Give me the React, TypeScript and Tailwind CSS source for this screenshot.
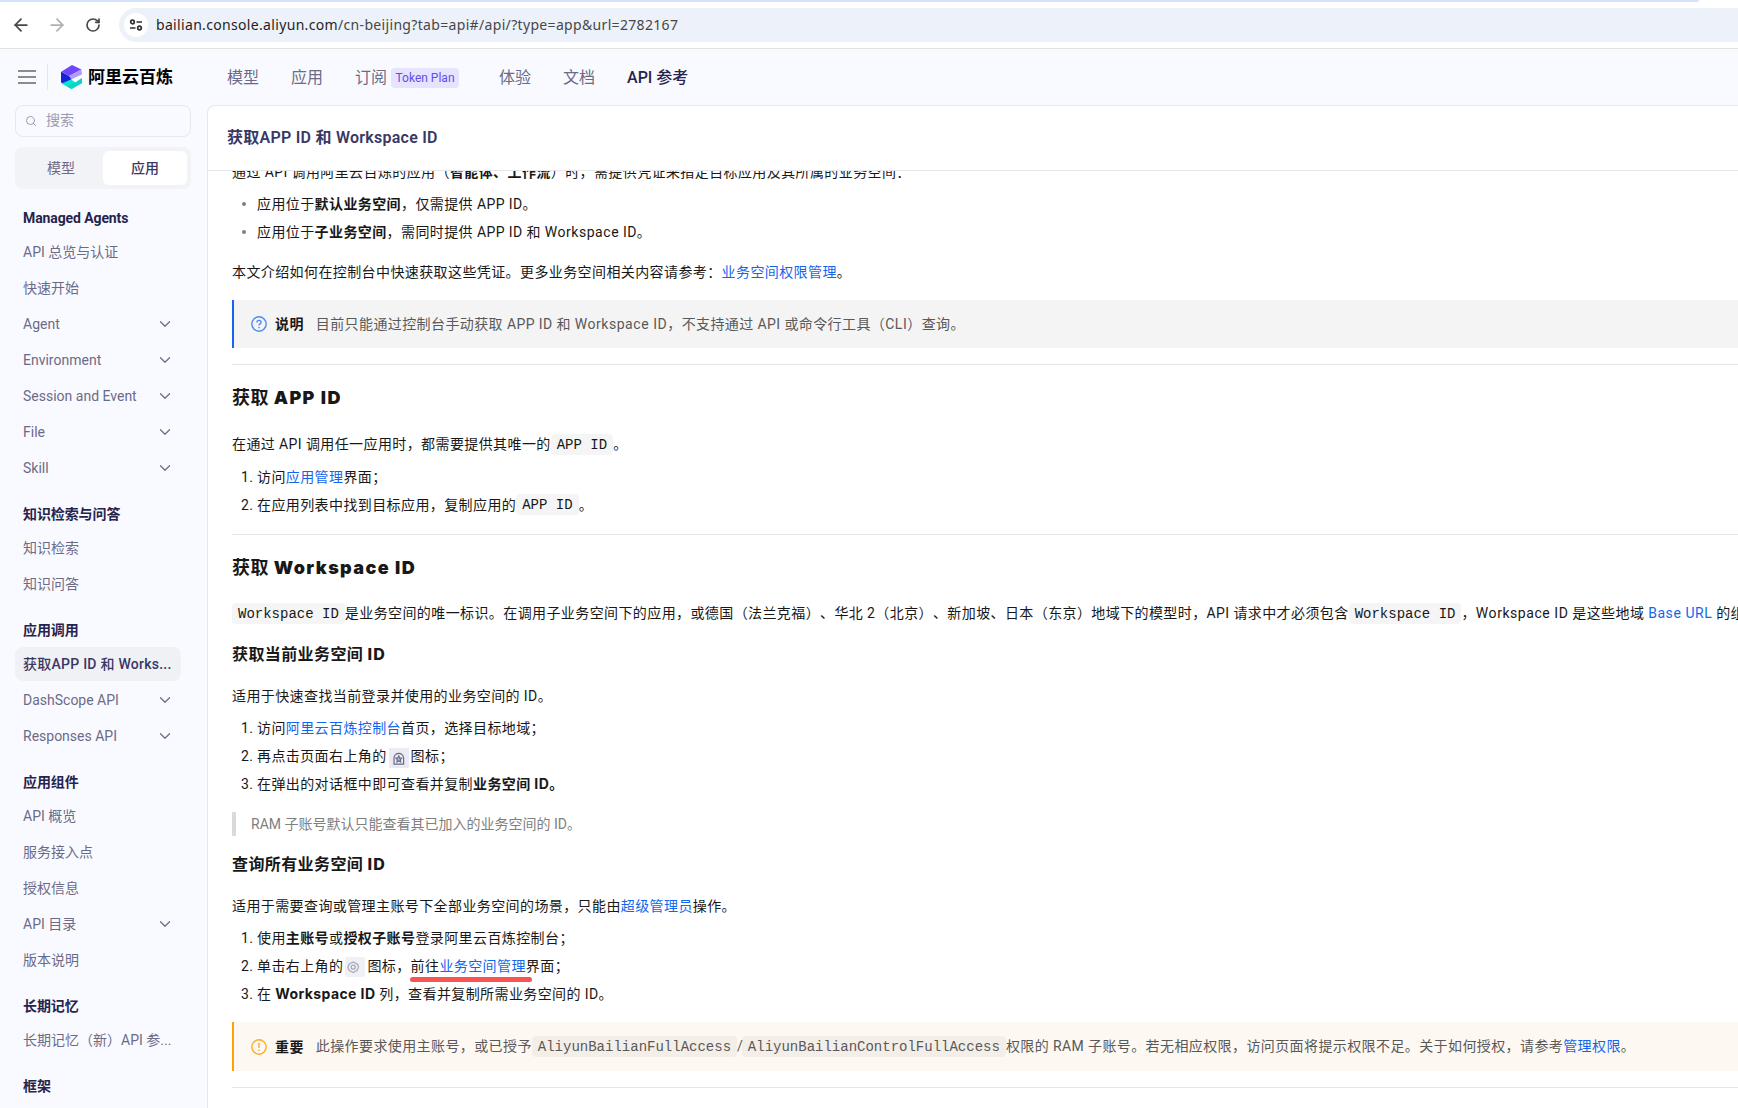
import React from "react";
import { ArrowLeft, ArrowRight, RotateCw, ChevronDown, Search } from "lucide-react";

const SECTIONS: { title: string; items: { label: string; more?: boolean; active?: boolean }[] }[] = [
  {
    title: "Managed Agents",
    items: [
      { label: "API 总览与认证" },
      { label: "快速开始" },
      { label: "Agent", more: true },
      { label: "Environment", more: true },
      { label: "Session and Event", more: true },
      { label: "File", more: true },
      { label: "Skill", more: true },
    ],
  },
  { title: "知识检索与问答", items: [{ label: "知识检索" }, { label: "知识问答" }] },
  {
    title: "应用调用",
    items: [
      { label: "获取APP ID 和 Works...", active: true },
      { label: "DashScope API", more: true },
      { label: "Responses API", more: true },
    ],
  },
  {
    title: "应用组件",
    items: [
      { label: "API 概览" },
      { label: "服务接入点" },
      { label: "授权信息" },
      { label: "API 目录", more: true },
      { label: "版本说明" },
    ],
  },
  { title: "长期记忆", items: [{ label: "长期记忆（新）API 参..." }] },
  { title: "框架", items: [] },
];

function Logo() {
  return (
    <svg viewBox="0 0 21 24" className="h-6 w-[21px]">
      <path d="M0.500 6.500 11 0 20.500 4.500 8 11z" fill="#7046fa" />
      <path d="M20.500 4.500 21 10 10.500 14.500 8 11z" fill="#b09afc" />
      <path d="M0 6.500 8 11 10.500 14.300 4 19 0 17.500z" fill="#1722dc" />
      <path d="M10.500 14.300 21 9.500V13l-6.500 4.500z" fill="#f9faff" />
      <path d="M0.500 18.500 10 14.500 14.500 17.500 21 13V18L10.500 24z" fill="#06e6cf" />
      <path d="M14.500 17.500 21 13V18L10.500 24 6 21.500z" fill="#10d3c4" />
    </svg>
  );
}

function Link({ children }: { children: React.ReactNode }) {
  return <a className="text-[#1366ec]">{children}</a>;
}

function B({ children }: { children: React.ReactNode }) {
  return <b className="font-['Inter','Noto_Sans_CJK_SC',sans-serif] font-bold">{children}</b>;
}

function Wide({ children }: { children: React.ReactNode }) {
  return <span className="tracking-[0.55px]">{children}</span>;
}

function Code({ children }: { children: React.ReactNode }) {
  return (
    <code className="relative -top-px rounded bg-black/[0.04] px-[6px] py-[2.5px] font-['Liberation_Mono','Noto_Sans_CJK_SC',monospace] text-[14px] tracking-normal">
      {children}
    </code>
  );
}

function Row({ n, children }: { n?: number; children: React.ReactNode }) {
  return (
    <li className="flex h-6 items-center whitespace-nowrap leading-6">
      {n ? (
        <span className="w-[25px] pl-[9px]">{n}.</span>
      ) : (
        <span className="w-[25px] pl-[10px]">
          <span className="block size-1 rounded-full bg-[#808080]" />
        </span>
      )}
      <span>{children}</span>
    </li>
  );
}

export default function App() {
  return (
    <div className="flex h-[1108px] w-[1738px] flex-col overflow-hidden bg-[#f9faff] font-['Roboto','Noto_Sans_CJK_SC',sans-serif] [text-spacing-trim:space-all]">
      <div className="h-[49px] shrink-0 border-b border-[#e1e3e1] bg-white">
        <div className="h-[2px] w-[1699px] rounded-br bg-[#d3e3fd]" />
        <div className="mt-[6px] flex h-[34px] items-center pl-[11px] text-[#474747]">
          <ArrowLeft className="size-5" strokeWidth={2.1} />
          <ArrowRight className="ml-4 size-5 text-[#b0b0b0]" strokeWidth={2.1} />
          <RotateCw className="ml-[18px] size-4" strokeWidth={2.5} />
          <div className="ml-[18px] flex h-[34px] flex-1 items-center rounded-l-full bg-[#edf1fa] pl-[5px]">
            <span className="flex size-6 items-center justify-center rounded-full bg-white">
              <svg viewBox="0 0 14 14" className="size-[14px]" fill="none" stroke="#303030" strokeWidth="1.700">
                <circle cx="3.500" cy="4" r="1.800" />
                <circle cx="10.500" cy="10" r="1.800" />
                <path d="M7.500 4H13M1 10h5.500" />
              </svg>
            </span>
            <span className="ml-2 pb-[2px] font-['Noto_Sans',sans-serif] text-[14px] tracking-[0.33px] text-[#474747]">
              <span className="text-[#1f1f1f]">bailian.console.aliyun.com</span>/cn-beijing?tab=api#/api/?type=app&amp;url=2782167
            </span>
          </div>
        </div>
      </div>

      <header className="flex h-14 shrink-0 items-center whitespace-nowrap text-[16px] text-[#6c6a87]">
        <svg viewBox="0 0 18 14" className="ml-[18px] h-[14px] w-[18px]" stroke="#8c8c8c" strokeWidth="1.800">
          <path d="M0 1h18M0 7h18M0 13h18" />
        </svg>
        <span className="ml-[11px] mr-[13px] h-[26px] w-px bg-[#e4e5ee]" />
        <Logo />
        <span className="ml-[6px] w-[86px] pt-[2px] text-[17px] font-bold text-black">阿里云百炼</span>
        <nav className="ml-[53px] flex items-center pt-[2px]">
          <span className="w-16">模型</span>
          <span className="w-16">应用</span>
          <span>订阅</span>
          <span className="ml-1 mr-10 flex h-5 w-[68px] items-center justify-center rounded bg-[#e6e3ff] text-[12px] text-[#6150e8]">
            Token Plan
          </span>
          <span className="w-16">体验</span>
          <span className="w-16">文档</span>
          <span className="font-medium text-[#26244c]">API 参考</span>
        </nav>
      </header>

      <div className="flex min-h-0 flex-1">
        <aside className="w-[207px] shrink-0 overflow-hidden whitespace-nowrap pl-[15px] text-[14px] text-[#6c6a87]">
          <div className="flex h-8 w-[176px] items-center rounded-lg border border-[#e6e8ee] pb-[2px] pl-[9px] text-[#9b9aae]">
            <Search className="mt-px size-[12px]" />
            <span className="ml-[9px]">搜索</span>
          </div>
          <div className="mt-[10px] flex h-[42px] w-[176px] rounded-lg bg-[#f2f3f7] p-1 text-center leading-[34px]">
            <span className="w-[84px]">模型</span>
            <span className="w-[84px] rounded-md bg-white font-medium text-[#3a3763]">应用</span>
          </div>
          <div className="flex flex-col gap-[13px] pt-[13px]">
            {SECTIONS.map((s) => (
              <section key={s.title}>
                <h4 className="mb-px h-8 pl-2 font-bold leading-8 tracking-[-0.1px] text-[#26244c]">{s.title}</h4>
                <ul className="flex flex-col gap-[2px]">
                  {s.items.map((it) => (
                    <li
                      key={it.label}
                      className={
                        "flex h-[34px] w-[166px] items-center justify-between rounded-lg pl-2 pr-[7px] " +
                        (it.active ? "bg-[#f0f1f5] tracking-[0.25px] font-medium text-[#3a3763]" : "")
                      }
                    >
                      <span>{it.label}</span>
                      {it.more && <ChevronDown className="size-[18px]" strokeWidth={1.6} />}
                    </li>
                  ))}
                </ul>
              </section>
            ))}
          </div>
        </aside>

        <main className="flex min-w-0 flex-1 flex-col rounded-tl-lg border-l border-t border-[#e6e8ec] bg-white">
          <div className="h-[65px] shrink-0 border-b border-[#e6e8ec] pl-[19px] text-[16px] font-semibold leading-[64px] tracking-[0.25px] text-[#3a3763]">
            获取APP ID 和 Workspace ID
          </div>
          <div className="min-h-0 flex-1 overflow-hidden whitespace-nowrap pl-6 text-[14px] leading-6 tracking-[0.4px] text-[#181818]">
            <p className="-mt-[11px] h-6">
              通过 API 调用阿里云百炼的应用（<B>智能体、工作流</B>）时，需提供凭证来指定目标应用及其所属的业务空间：
            </p>
            <ul className="mt-2 flex flex-col gap-1">
              <Row>应用位于<B>默认业务空间</B>，仅需提供 APP ID。</Row>
              <Row>应用位于<B>子业务空间</B>，需同时提供 APP ID 和 <Wide>Workspace</Wide> ID。</Row>
            </ul>
            <p className="mt-4 h-6">
              本文介绍如何在控制台中快速获取这些凭证。更多业务空间相关内容请参考：<Link>业务空间权限管理</Link>。
            </p>
            <div className="mt-4 flex h-12 items-center border-l-2 border-[#1366ec] bg-[#f4f4f4] pl-[17px] text-[#595959]">
              <svg viewBox="0 0 16 16" className="size-4" fill="none" stroke="#4a8af4" strokeWidth="1.400">
                <circle cx="8" cy="8" r="7.200" />
                <path d="M5.900 6.500c0-3 4.200-2.700 4.200-.2C10.100 7.900 8 7.800 8 9.600M8 10.900v1.400" />
              </svg>
              <b className="ml-[8px] text-[#181818]">说明</b>
              <span className="ml-3">目前只能通过控制台手动获取 APP ID 和 <Wide>Workspace ID</Wide>，不支持通过 API 或命令行工具（<Wide>CLI</Wide>）查询。</span>
            </div>
            <hr className="mt-4 border-[#e6e6e6]" />

            <h2 className="mt-[19px] h-7 text-[18px] font-bold leading-7">
              获取 <span className="font-['Inter',sans-serif] font-black tracking-[1.4px]">APP ID</span>
            </h2>
            <p className="mt-5 h-6">
              在通过 API 调用任一应用时，都需要提供其唯一的<Code>APP ID</Code>。
            </p>
            <ol className="mt-[9px] flex flex-col gap-1">
              <Row n={1}>访问<Link>应用管理</Link>界面；</Row>
              <Row n={2}>在应用列表中找到目标应用，复制应用的<Code>APP ID</Code>。</Row>
            </ol>
            <hr className="mt-[17px] border-[#e6e6e6]" />

            <h2 className="mt-[19px] h-7 text-[18px] font-bold leading-7">
              获取 <span className="font-['Inter',sans-serif] font-black tracking-[1.4px]">Workspace ID</span>
            </h2>
            <p className="mt-[19px] h-6">
              <Code>Workspace ID</Code>是业务空间的唯一标识。在调用子业务空间下的应用，或德国（法兰克福）、华北 2（北京）、新加坡、日本（东京）地域下的模型时，API 请求中才必须包含<Code>Workspace ID</Code>，<Wide>Workspace ID</Wide> 是这些地域 <Link><Wide>Base URL</Wide></Link> 的组成部分
            </p>
            <h3 className="mt-[15px] h-7 text-[16px] font-bold leading-7">
              获取当前业务空间 <span className="font-['Inter',sans-serif] font-extrabold tracking-[1px]">ID</span>
            </h3>
            <p className="mt-4 h-6">适用于快速查找当前登录并使用的业务空间的 ID。</p>
            <ol className="mt-2 flex flex-col gap-1">
              <Row n={1}>访问<Link>阿里云百炼控制台</Link>首页，选择目标地域；</Row>
              <Row n={2}>
                再点击页面右上角的
                <svg viewBox="0 0 20 20" className="relative top-px ml-[2px] mr-[2px] inline size-5" fill="none" stroke="#6c6a87" strokeWidth="1.200">
                  <rect width="20" height="20" fill="#ebecf3" stroke="none" />
                  <path d="M5 16.200V10c0-2.800 2.500-4.600 4.800-4.600s4.800 1.800 4.800 4.600v6.200z" />
                  <path d="m9.800 8 .9 1.900 2 .3-1.400 1.500.3 2.300-1.800-1-1.800 1 .3-2.300-1.400-1.500 2-.3z" fill="#6c6a87" fillOpacity="0.4" />
                </svg>
                图标；
              </Row>
              <Row n={3}>在弹出的对话框中即可查看并复制<B>业务空间 ID。</B></Row>
            </ol>
            <blockquote className="mt-4 h-6 border-l-4 border-[#d9d9d9] pl-[15px] tracking-normal text-[#808080]">
              RAM 子账号默认只能查看其已加入的业务空间的 ID。
            </blockquote>
            <h3 className="mt-[14px] h-7 text-[16px] font-bold leading-7">
              查询所有业务空间 <span className="font-['Inter',sans-serif] font-extrabold tracking-[1px]">ID</span>
            </h3>
            <p className="mt-4 h-6">
              适用于需要查询或管理主账号下全部业务空间的场景，只能由<Link>超级管理员</Link>操作。
            </p>
            <ol className="mt-2 flex flex-col gap-1">
              <Row n={1}>使用<B>主账号</B>或<B>授权子账号</B>登录阿里云百炼控制台；</Row>
              <Row n={2}>
                单击右上角的
                <svg viewBox="0 0 20 20" className="ml-[2px] mr-[2px] inline size-5" fill="none" stroke="#a9a8bd" strokeWidth="1.300">
                  <rect width="20" height="20" rx="2" fill="#f0f1f6" stroke="none" />
                  <path d="M8.200 5 12.700 7.300 13.500 10.200 12 13.500 8.200 15.500 4.200 13.500 2.800 10.200 4.200 7z" strokeLinejoin="round" />
                  <circle cx="8.200" cy="10.200" r="2" />
                </svg>
                图标，
                <span className="relative">
                  前往<Link>业务空间管理</Link>
                  <span className="absolute -bottom-[8px] -left-px h-[5px] w-[122px] rounded-full bg-[#fb5252]" />
                </span>
                界面；
              </Row>
              <Row n={3}>在 <B>Workspace ID</B> 列，查看并复制所需业务空间的 ID。</Row>
            </ol>
            <div className="mt-4 flex h-[49px] items-center border-l-2 border-[#ffa003] bg-[#fef8f2] pl-[17px] text-[#595959]">
              <svg viewBox="0 0 16 16" className="size-4" fill="none" stroke="#ffab26" strokeWidth="1.400">
                <circle cx="8" cy="8" r="7.200" />
                <path d="M8 4v5M8 10.500V12" />
              </svg>
              <b className="ml-[8px] text-[#181818]">重要</b>
              <span className="ml-3">
                此操作要求使用主账号，或已授予<Code>AliyunBailianFullAccess</Code><span className="tracking-[-1px]">/</span><Code>AliyunBailianControlFullAccess</Code>权限的 RAM 子账号。若无相应权限，访问页面将提示权限不足。关于如何授权，请参考<Link>管理权限</Link>。
              </span>
            </div>
            <hr className="mt-4 border-[#e6e6e6]" />
          </div>
        </main>
      </div>
    </div>
  );
}
